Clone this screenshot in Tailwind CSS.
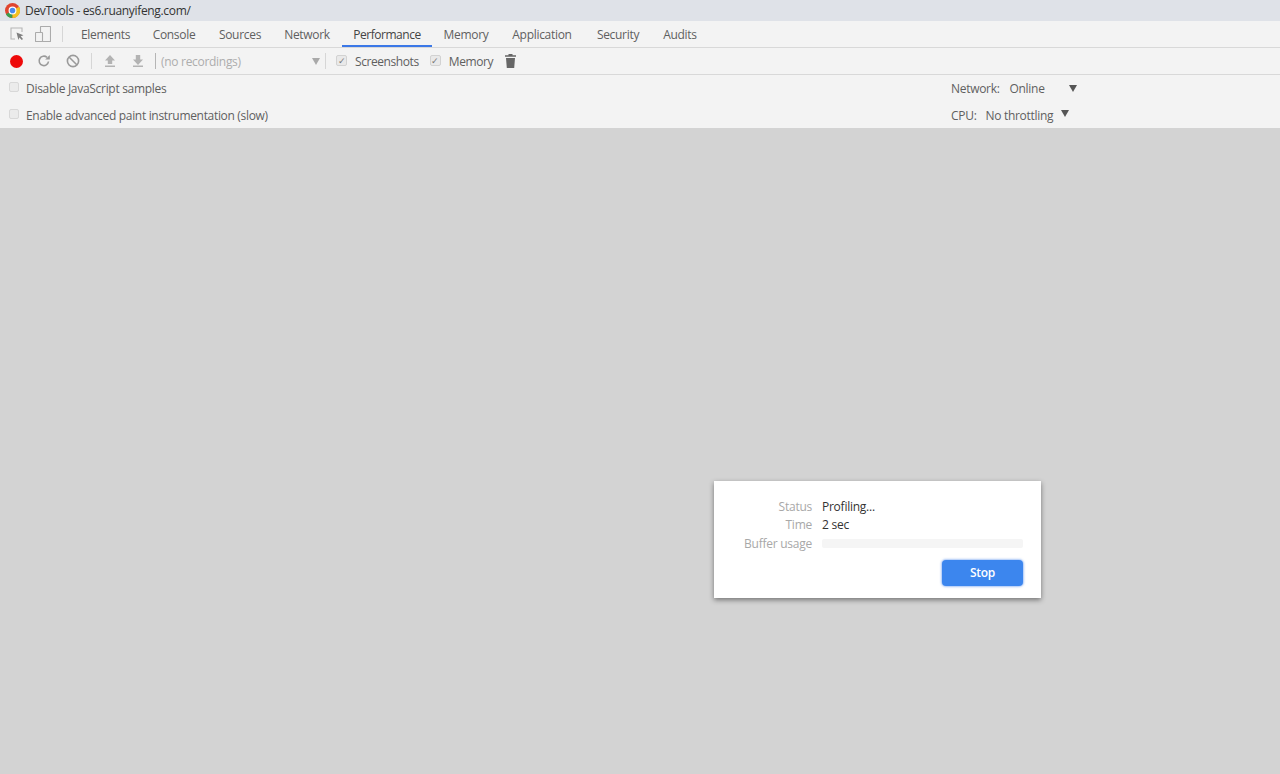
<!DOCTYPE html>
<html lang="en">
<head>
  <meta charset="UTF-8">
  <title>DevTools - es6.ruanyifeng.com/</title>
  <script src="https://cdn.jsdelivr.net/npm/@tailwindcss/browser@4"></script>
</head>
<body class="h-[774px] w-[1280px] overflow-hidden bg-[#d3d3d3] font-['Open_Sans','Noto_Sans',sans-serif] text-[12px] text-[#5f5f5f]">

  <!-- Title bar -->
  <div class="flex h-[21px] items-center bg-[#dfe2e8] pl-[5px] text-[12px] text-[#333]">
    <svg class="h-[15px] w-[15px]" viewBox="0 0 16 16">
      <circle cx="8" cy="8" r="8" fill="#e0452f"/>
      <path d="M8 8 L1 12 A8 8 0 0 0 8 16 Z" fill="#3a9d4f"/>
      <path d="M8 8 L15 4 A8 8 0 0 1 8 16 Z" fill="#f4c21f"/>
      <circle cx="8" cy="8" r="3.6" fill="#4a8bee" stroke="#fff" stroke-width="1.2"/>
    </svg>
    <span class="ml-[5px] tracking-[-0.33px]">DevTools - es6.ruanyifeng.com/</span>
  </div>

  <!-- Tabs -->
  <div class="flex h-[27px] items-center border-b border-[#d8d8d8] bg-[#f3f3f3]">
    <svg class="ml-[9px] h-[16px] w-[16px]" viewBox="0 0 16 16" fill="none">
      <path d="M6 13H2V2h11v4" stroke="#b5b5b5" stroke-width="1.1"/>
      <path d="M7.500 6.500l7 2.800-2.800 1 2.300 2.600-1.200 1.200-2.400-2.600-1 2.600z" fill="#808080"/>
    </svg>
    <svg class="ml-[10px] h-[16px] w-[16px]" viewBox="0 0 16 16" fill="none" stroke="#ababab" stroke-width="1.100">
      <rect x="5.500" y="0.500" width="10" height="15" rx="0.500"/>
      <rect x="0.500" y="6.500" width="7" height="9" rx="0.500" fill="#f3f3f3"/>
    </svg>
    <div class="ml-[11px] h-[16px] w-px bg-[#d6d6d6]"></div>
    <div class="ml-[13px] flex h-full tracking-[-0.3px]">
      <div class="flex h-full w-[59px] items-center justify-center pt-[2px]">Elements</div>
      <div class="ml-[12px] flex h-full w-[54px] items-center justify-center pt-[2px]">Console</div>
      <div class="ml-[12px] flex h-full w-[54px] items-center justify-center pt-[2px]">Sources</div>
      <div class="ml-[11px] flex h-full w-[58px] items-center justify-center pt-[2px]">Network</div>
      <div class="ml-[6px] flex h-full w-[90px] items-center justify-center border-b-2 border-[#3b78e7] pt-[4px] tracking-[-0.45px] text-[#444]">Performance</div>
      <div class="ml-[7px] flex h-full w-[54px] items-center justify-center pt-[2px]">Memory</div>
      <div class="ml-[13px] flex h-full w-[72px] items-center justify-center pt-[2px]">Application</div>
      <div class="ml-[13px] flex h-full w-[54px] items-center justify-center pt-[2px]">Security</div>
      <div class="ml-[11px] flex h-full w-[48px] items-center justify-center pt-[2px]">Audits</div>
    </div>
  </div>

  <!-- Toolbar -->
  <div class="flex h-[27px] items-center border-b border-[#d8d8d8] bg-[#f3f3f3]">
    <div class="ml-[10px] h-[13px] w-[13px] rounded-full bg-[#ee0a0a]"></div>
    <svg class="ml-[14px] h-[14px] w-[14px]" viewBox="0 0 14 14" fill="none">
      <path d="M11.500 7.500A4.700 4.700 0 1 1 10 3.400" stroke="#9a9a9a" stroke-width="1.600"/>
      <path d="M8.200 5.600h4.600V1z" fill="#9a9a9a"/>
    </svg>
    <svg class="ml-[15px] h-[14px] w-[14px]" viewBox="0 0 14 14" fill="none" stroke="#9a9a9a" stroke-width="1.600">
      <circle cx="7" cy="7" r="5.600"/>
      <path d="M3 3l8 8"/>
    </svg>
    <div class="ml-[11px] h-[16px] w-px bg-[#d6d6d6]"></div>
    <svg class="ml-[11px] h-[14px] w-[14px]" viewBox="0 0 14 14" fill="#b3b3b3">
      <path d="M7 1l5 5.500H9.200V10H4.800V6.500H2zM2 11.500h10V13H2z"/>
    </svg>
    <svg class="ml-[14px] h-[14px] w-[14px]" viewBox="0 0 14 14" fill="#b3b3b3">
      <path d="M4.800 1h4.400v4.500H12L7 11 2 5.500h2.800zM2 11.500h10V13H2z"/>
    </svg>
    <div class="ml-[10px] h-[16px] w-px bg-[#b5b5b5]"></div>
    <div class="ml-[5px] flex w-[159px] items-center justify-between text-[#adadad]">
      <span class="pt-[2px] tracking-[-0.3px]">(no recordings)</span>
      <span class="h-0 w-0 border-x-[4px] border-t-[7px] border-x-transparent border-t-[#a9a9a9]"></span>
    </div>
    <div class="ml-[5px] h-[16px] w-px bg-[#d6d6d6]"></div>
    <div class="ml-[10px] -mt-[1px] flex h-[11px] w-[11px] items-center justify-center rounded-[2px] border border-[#d2d2d2] bg-[#e9e9e9] text-[9px] leading-none text-[#777]">✓</div>
    <span class="ml-[8px] pt-[2px] tracking-[-0.42px]">Screenshots</span>
    <div class="ml-[11px] -mt-[2px] flex h-[11px] w-[11px] items-center justify-center rounded-[2px] border border-[#d2d2d2] bg-[#e9e9e9] text-[9px] leading-none text-[#777]">✓</div>
    <span class="ml-[8px] pt-[2px] tracking-[-0.38px]">Memory</span>
    <svg class="ml-[12px] h-[14px] w-[11px]" viewBox="0 0 11 14" fill="#666">
      <path d="M3.500 0h4v1.200H11v1.600H0V1.200h3.500zM1 4h9l-.8 10H1.800z"/>
    </svg>
  </div>

  <!-- Capture settings -->
  <div class="h-[53px] bg-[#f3f3f3] tracking-[-0.3px]">
    <div class="flex h-[26px] items-center pl-[9px] pt-[2px]">
      <div class="-mt-[4px] h-[10px] w-[10px] rounded-[2px] border border-[#d8d8d8] bg-[#ebebeb]"></div>
      <span class="ml-[7px] w-[925px]">Disable JavaScript samples</span>
      <span>Network:</span>
      <span class="ml-[10px] w-[59px]">Online</span>
      <span class="-mt-[2px] h-0 w-0 border-x-[4px] border-t-[7px] border-x-transparent border-t-[#555]"></span>
    </div>
    <div class="flex h-[27px] items-center pl-[9px] pt-[2px]">
      <div class="-mt-[4px] h-[10px] w-[10px] rounded-[2px] border border-[#d8d8d8] bg-[#ebebeb]"></div>
      <span class="ml-[7px] w-[925px] tracking-[-0.32px]">Enable advanced paint instrumentation (slow)</span>
      <span>CPU:</span>
      <span class="ml-[9px] w-[76px]">No throttling</span>
      <span class="-mt-[4px] h-0 w-0 border-x-[4px] border-t-[7px] border-x-transparent border-t-[#555]"></span>
    </div>
  </div>

  <!-- Status dialog -->
  <div class="absolute left-[714px] top-[481px] h-[117px] w-[327px] bg-white pl-[16px] pr-[18px] pt-[17px] shadow-[0_2px_5px_rgba(0,0,0,0.45)] tracking-[-0.25px]">
    <div class="grid grid-cols-[82px_1fr] items-center gap-x-[10px]">
      <div class="h-[18px] text-right leading-[18px] text-[#a8a8a8]">Status</div>
      <div class="h-[18px] leading-[18px] text-[#333]">Profiling...</div>
      <div class="h-[18px] text-right leading-[18px] text-[#a8a8a8]">Time</div>
      <div class="h-[18px] leading-[18px] text-[#333]">2 sec</div>
      <div class="h-[18px] pt-[1px] text-right leading-[18px] text-[#a8a8a8]">Buffer usage</div>
      <div class="h-[9px] rounded-[2px] bg-[#f5f5f5]"></div>
    </div>
    <div class="mt-[8px] flex justify-end">
      <button class="h-[26px] w-[81px] rounded-[4px] bg-[#3c86ee] text-[12px] font-semibold text-white shadow-[0_0_2px_1px_rgba(80,140,240,0.5)]">Stop</button>
    </div>
  </div>

</body>
</html>
